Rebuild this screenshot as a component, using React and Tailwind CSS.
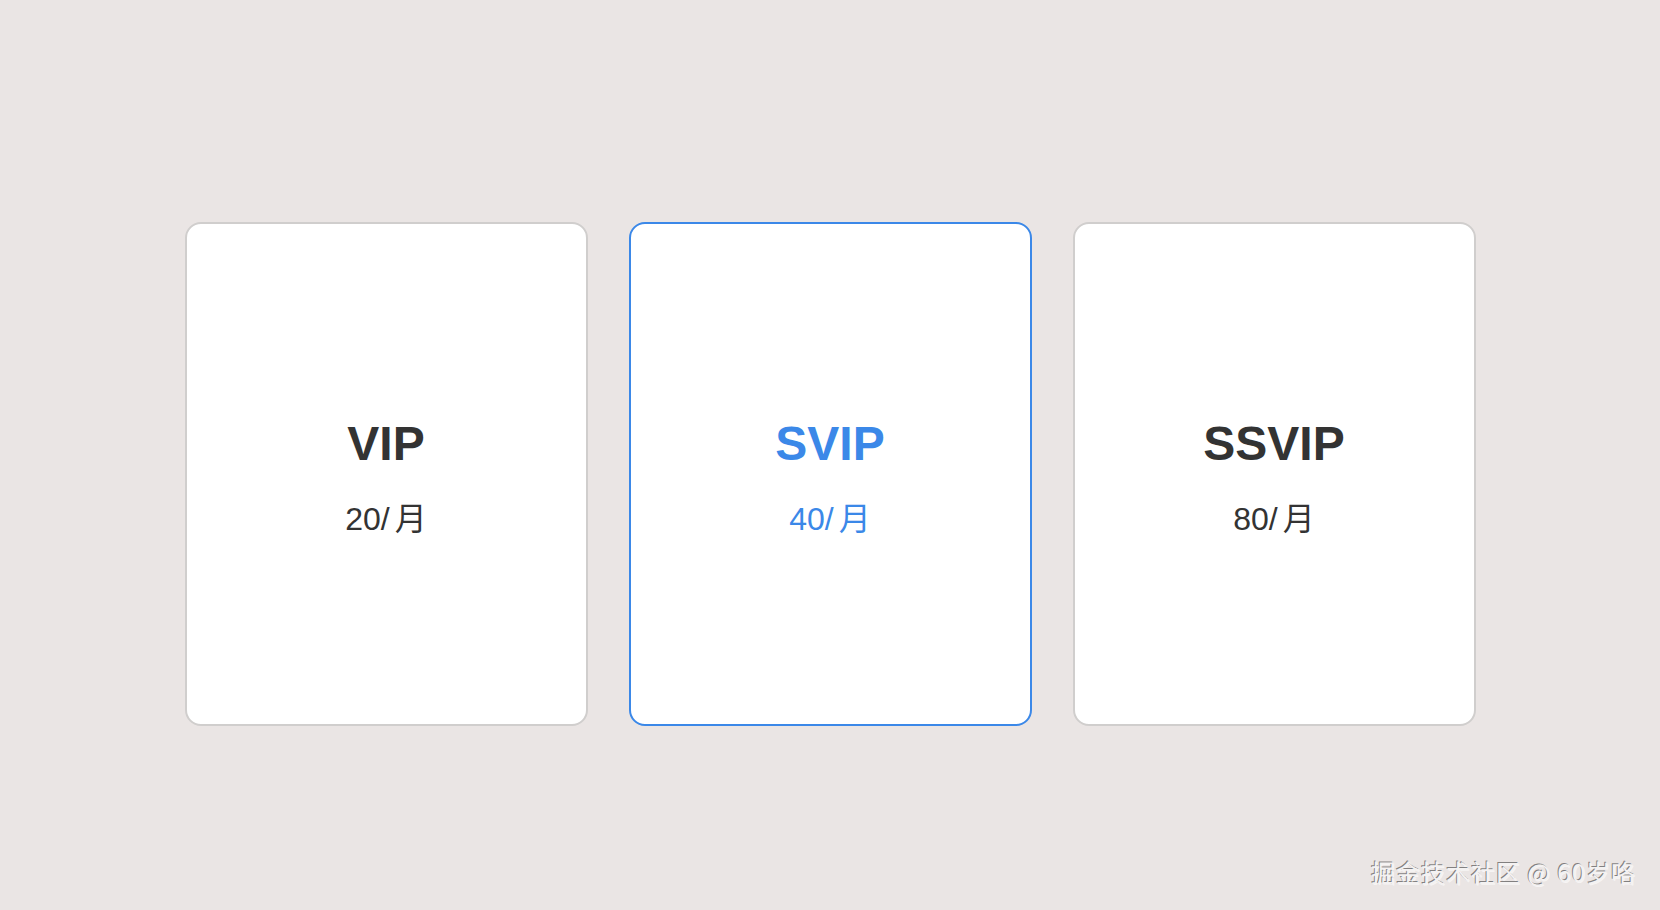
export default function App() {
  const plans = [
    { name: "VIP", price: "20", active: false },
    { name: "SVIP", price: "40", active: true },
    { name: "SSVIP", price: "80", active: false },
  ];
  return (
    <div className="relative w-full h-[910px] bg-[#eae5e4] flex justify-center pt-[222px] gap-[41px] font-['Liberation_Sans','Noto_Sans_CJK_SC',sans-serif] overflow-hidden">
      {plans.map((p) => (
        <div
          key={p.name}
          className={
            p.active
              ? "w-[403px] h-[504px] bg-white rounded-[16px] border-2 border-[#3b88e8] flex flex-col items-center justify-center gap-[32px] pt-[6px] text-[#3b88e8]"
              : "w-[403px] h-[504px] bg-white rounded-[16px] border-2 border-[#d0cecd] flex flex-col items-center justify-center gap-[32px] pt-[6px] text-[#333333]"
          }
        >
          <div className="text-[48px] leading-none font-bold">{p.name}</div>
          <div className="text-[32px] leading-none">
            {p.price}/<span className="font-['Noto_Sans_CJK_SC',sans-serif] ml-[5px]">月</span>
          </div>
        </div>
      ))}
      <div className="absolute right-[24px] bottom-[26px] text-[24px] leading-none tracking-[1px] text-[#f4f2f2] [text-shadow:-1px_-1px_0_rgba(60,60,60,0.6),1px_1px_0_rgba(255,255,255,0.6)] font-['Noto_Sans_CJK_SC',sans-serif]">
        掘金技术社区 @ 60岁咯
      </div>
    </div>
  );
}
